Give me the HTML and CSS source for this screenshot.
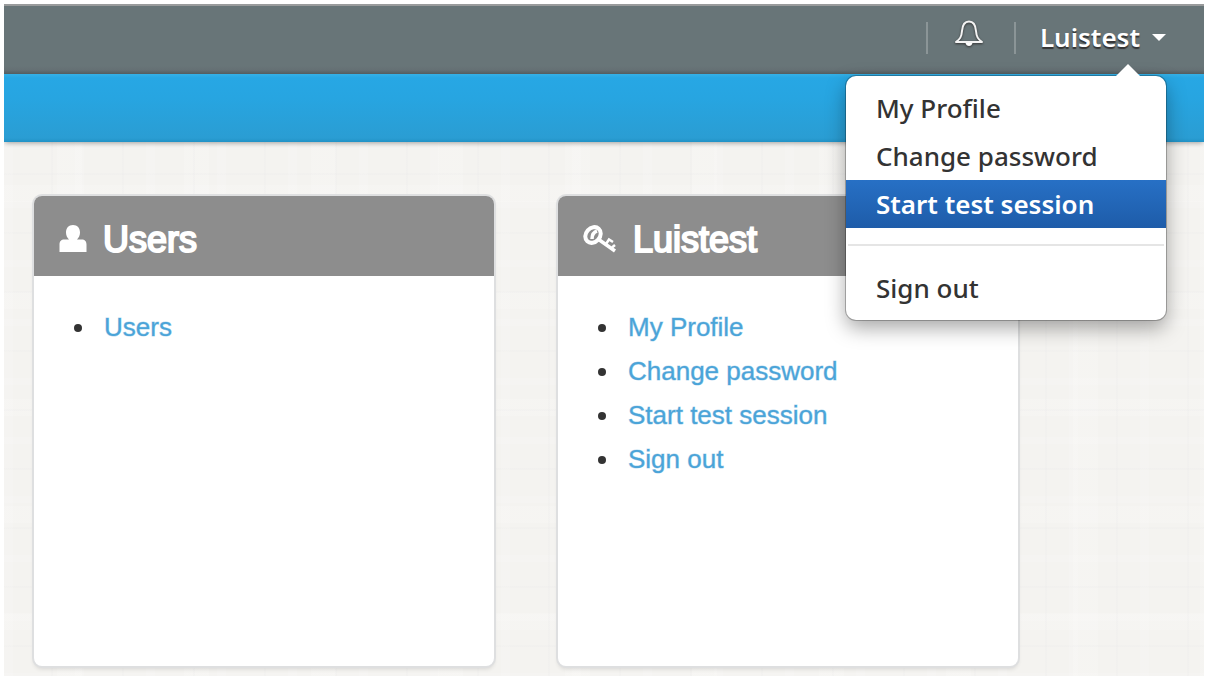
FILE: index.html
```html
<!DOCTYPE html>
<html lang="en">
<head>
  <meta charset="UTF-8">
  <meta name="viewport" content="width=device-width, initial-scale=1.0">
  <title>Luistest</title>
  <link rel="stylesheet" href="styles.css">
</head>
<body>
  <header class="navbar">
    <a href="#notifications" class="nav-bell" aria-label="Notifications">
      <svg width="32" height="32" viewBox="0 0 32 32" fill="none">
        <path d="M3 24c4-3 5.500-5 6-11C9.500 6.500 12 3.500 16 3.500s6.500 3 7 9.500C23.500 19 25 21 29 24z" stroke="#f4f4f4" stroke-width="2" stroke-linejoin="round"/>
        <path d="M12.500 25h7c-.5 2-1.700 3-3.500 3s-3-1-3.500-3z" fill="#fff"/>
      </svg>
    </a>
    <div class="dropdown">
      <button type="button" class="dropdown-toggle" aria-expanded="true">Luistest <span class="caret"></span></button>
      <ul class="dropdown-menu">
        <li><a href="#profile">My Profile</a></li>
        <li><a href="#password">Change password</a></li>
        <li class="active"><a href="#session">Start test session</a></li>
        <li class="divider"></li>
        <li><a href="#signout">Sign out</a></li>
      </ul>
    </div>
  </header>
  <div class="subnav"></div>

  <main class="content">
    <section class="panel">
      <h2 class="panel-title">
        <svg class="panel-icon" width="30" height="30" viewBox="0 0 30 30" fill="#fff">
          <path d="M15 0c4.500 0 7 3 7 7.500 0 3-1.200 5-3 7h4.500c3.500 0 5 2 5 5V27h-27v-7.500c0-3 1.500-5 5-5H11c-1.800-2-3-4-3-7C8 3 10.500 0 15 0z"/>
        </svg>
        Users
      </h2>
      <ul class="panel-list">
        <li><a href="#users">Users</a></li>
      </ul>
    </section>
    <section class="panel">
      <h2 class="panel-title">
        <svg class="panel-icon" width="36" height="30" viewBox="0 0 36 30" fill="none" stroke="#fff">
          <ellipse cx="11" cy="10" rx="7" ry="8.500" transform="rotate(42 11 10)" stroke-width="4"/>
          <path d="M10 14c0-4 2-7 5-8M16 14l17 12" stroke-width="3.500"/>
          <path d="M24 19l3-4.500 4 2.500M30 22.500l3-2.500" stroke-width="2.500"/>
        </svg>
        Luistest
      </h2>
      <ul class="panel-list">
        <li><a href="#profile">My Profile</a></li>
        <li><a href="#password">Change password</a></li>
        <li><a href="#session">Start test session</a></li>
        <li><a href="#signout">Sign out</a></li>
      </ul>
    </section>
  </main>
</body>
</html>
```
FILE: styles.css
```css
* {
  box-sizing: border-box;
}
body {
  display: flex;
  flex-direction: column;
  min-height: 100vh;
  margin: 0;
  padding: 4px 6px 0 4px;
  background: #fff;
  font-family: 'Liberation Sans', Arial, sans-serif;
  font-size: 26px;
  color: #333;
}
.navbar {
  display: flex;
  justify-content: flex-end;
  align-items: center;
  height: 70px;
  padding: 0 38px 4px 0;
  background: linear-gradient(#687578 60px, #657074 64px, #535d60);
  border-top: 2px solid #999b9c;
  font-family: 'Noto Sans', sans-serif;
}
.nav-bell {
  display: flex;
  justify-content: center;
  width: 90px;
  height: 32px;
  border: solid #8b9597;
  border-width: 0 2px;
}
.nav-bell svg {
  margin-top: -4px;
  margin-right: 4px;
  filter: drop-shadow(0 1px 1px #333);
}
.dropdown {
  position: relative;
}
.dropdown-toggle {
  display: flex;
  align-items: center;
  gap: 12px;
  padding: 0 0 2px 24px;
  background: none;
  border: none;
  color: #fff;
  font-family: 'Noto Sans', sans-serif;
  font-size: 26px;
  font-weight: 600;
  line-height: 36px;
  text-shadow: 0 2px 1px #333;
  cursor: pointer;
}
.caret {
  border: 7px solid transparent;
  border-top-color: #fff;
  border-bottom: 0;
}
.dropdown-menu {
  position: absolute;
  top: 100%;
  right: 0;
  z-index: 10;
  width: 320px;
  margin: 19px 0 0;
  padding: 8px 0;
  list-style: none;
  background: #fff;
  border-radius: 10px;
  box-shadow: 0 0 0 1px rgba(0,0,0,0.25), 0 8px 20px rgba(0,0,0,0.35);
}
.dropdown-menu::before {
  content: '';
  position: absolute;
  top: -12px;
  right: 26px;
  border: 12px solid transparent;
  border-top: 0;
  border-bottom-color: #fff;
}
.dropdown-menu a {
  display: block;
  padding: 0 30px;
  line-height: 48px;
  color: #333;
  font-size: 26px;
  font-weight: 500;
  text-decoration: none;
}
.dropdown-menu .active a {
  background: linear-gradient(#2770c5, #1e5ca9);
  color: #fff;
  font-weight: 600;
}
.dropdown-menu .divider {
  height: 2px;
  margin: 16px 2px 18px;
  background: #e5e5e5;
}
.subnav {
  position: relative;
  height: 68px;
  background: linear-gradient(#35b0e6, #27a7e4 4px, #27a5e1 24px, #2a9dd3 64px, #2192c6);
  box-shadow: 0 2px 5px -1px rgba(0,0,0,0.35);
  clip-path: inset(0 0 -10px 0);
}
.content {
  flex: 1;
  display: flex;
  align-items: flex-start;
  gap: 64px;
  padding: 54px 30px 10px;
  /* woven linen texture */
  background:
    repeating-linear-gradient(90deg, rgba(255,255,255,0.12) 0 9px, transparent 9px 47px, rgba(225,225,228,0.12) 47px 49px, transparent 49px 71px),
    repeating-linear-gradient(rgba(255,255,255,0.12) 0 7px, transparent 7px 31px, rgba(225,225,228,0.12) 31px 33px, transparent 33px 59px),
    repeating-linear-gradient(90deg, transparent 0 53px, rgba(255,255,255,0.14) 53px 78px, transparent 78px 127px),
    repeating-linear-gradient(transparent 0 43px, rgba(255,255,255,0.14) 43px 60px, transparent 60px 107px),
    #f4f3f0;
}
.panel {
  width: 460px;
  min-height: 470px;
  background: #fff;
  border-radius: 8px;
  box-shadow: 0 0 0 2px #dedfe0, 0 3px 4px rgba(0,0,0,0.12);
}
.panel-title {
  display: flex;
  align-items: center;
  height: 80px;
  margin: 0;
  padding: 8px 24px 0;
  gap: 15px;
  background: #8d8d8d;
  border-radius: 8px 8px 0 0;
  color: #fff;
  font-size: 36px;
  font-weight: 400;
  -webkit-text-stroke: 2px #fff;
}
.panel-list {
  margin: 0;
  padding: 29px 24px 29px 63px;
  line-height: 44px;
}
.panel-list li {
  padding-left: 7px;
}
.panel-list a {
  color: #4ba4d8;
  text-decoration: none;
  -webkit-text-stroke: 1px rgba(75,164,216,0.4);
}
```
